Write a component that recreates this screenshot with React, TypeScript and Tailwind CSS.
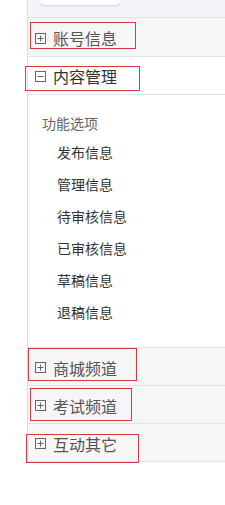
import React from "react";

const BoxIcon = ({ open }: { open?: boolean }) => (
  <svg width="11" height="11" viewBox="0 0 11 11" className="shrink-0">
    <rect x="0.5" y="0.5" width="10" height="10" fill="none" stroke="#666" strokeWidth="1" />
    <line x1="2.5" y1="5.5" x2="8.5" y2="5.5" stroke="#666" strokeWidth="1" />
    {!open && <line x1="5.5" y1="2.5" x2="5.5" y2="8.5" stroke="#666" strokeWidth="1" />}
  </svg>
);

const Header = ({ title, open, h }: { title: string; open?: boolean; h: string }) => (
  <div
    className={`${h} flex items-center gap-[7px] pl-[7px] border-b border-[#e2e2e2] ${
      open ? "bg-white pt-px text-[#333]" : "bg-[#f6f6f6] pt-[2px] text-[#555]"
    }`}
  >
    <BoxIcon open={open} />
    <span className="text-[16px] leading-[20px]">{title}</span>
  </div>
);

const items = ["发布信息", "管理信息", "待审核信息", "已审核信息", "草稿信息", "退稿信息"];

// red annotation frames drawn over the menu
const marks = [
  "left-[30px] top-[22px] w-[106px] h-[27px]",
  "left-[25px] top-[66px] w-[115px] h-[25px]",
  "left-[28px] top-[348px] w-[109px] h-[33px]",
  "left-[30px] top-[388px] w-[102px] h-[33px]",
  "left-[26px] top-[434px] w-[113px] h-[29px]",
];

export default function App() {
  return (
    <div
      className="relative w-[225px] h-[505px] bg-white overflow-hidden"
      style={{ fontFamily: '"Noto Sans CJK SC", "Noto Sans", sans-serif' }}
    >
      <div className="ml-[27px] border-l border-[#dcdcdc]">
        <div className="h-[18px] bg-[#f3f5f8] border-b border-[#e2e2e2]">
          <div className="ml-[12px] w-[80px] h-[5px] bg-white rounded-b-[6px] shadow-[0_1px_3px_rgba(0,0,0,0.15)]" />
        </div>
        <Header title="账号信息" h="h-[39px]" />
        <Header title="内容管理" open h="h-[38px]" />
        <div className="h-[253px] bg-white border-b border-[#e2e2e2] pt-[18px]">
          <div className="pl-[14px] text-[14px] leading-[20px] text-[#666]">功能选项</div>
          <ul className="mt-[3px] pl-[29px]">
            {items.map((t) => (
              <li key={t} className="h-8 leading-8 text-[14px] text-[#333]">
                {t}
              </li>
            ))}
          </ul>
        </div>
        <Header title="商城频道" h="h-[38px]" />
        <Header title="考试频道" h="h-[38px]" />
        <Header title="互动其它" h="h-[38px]" />
      </div>
      {marks.map((m) => (
        <div key={m} className={`absolute ${m} border border-[#d43a44]`} />
      ))}
    </div>
  );
}
